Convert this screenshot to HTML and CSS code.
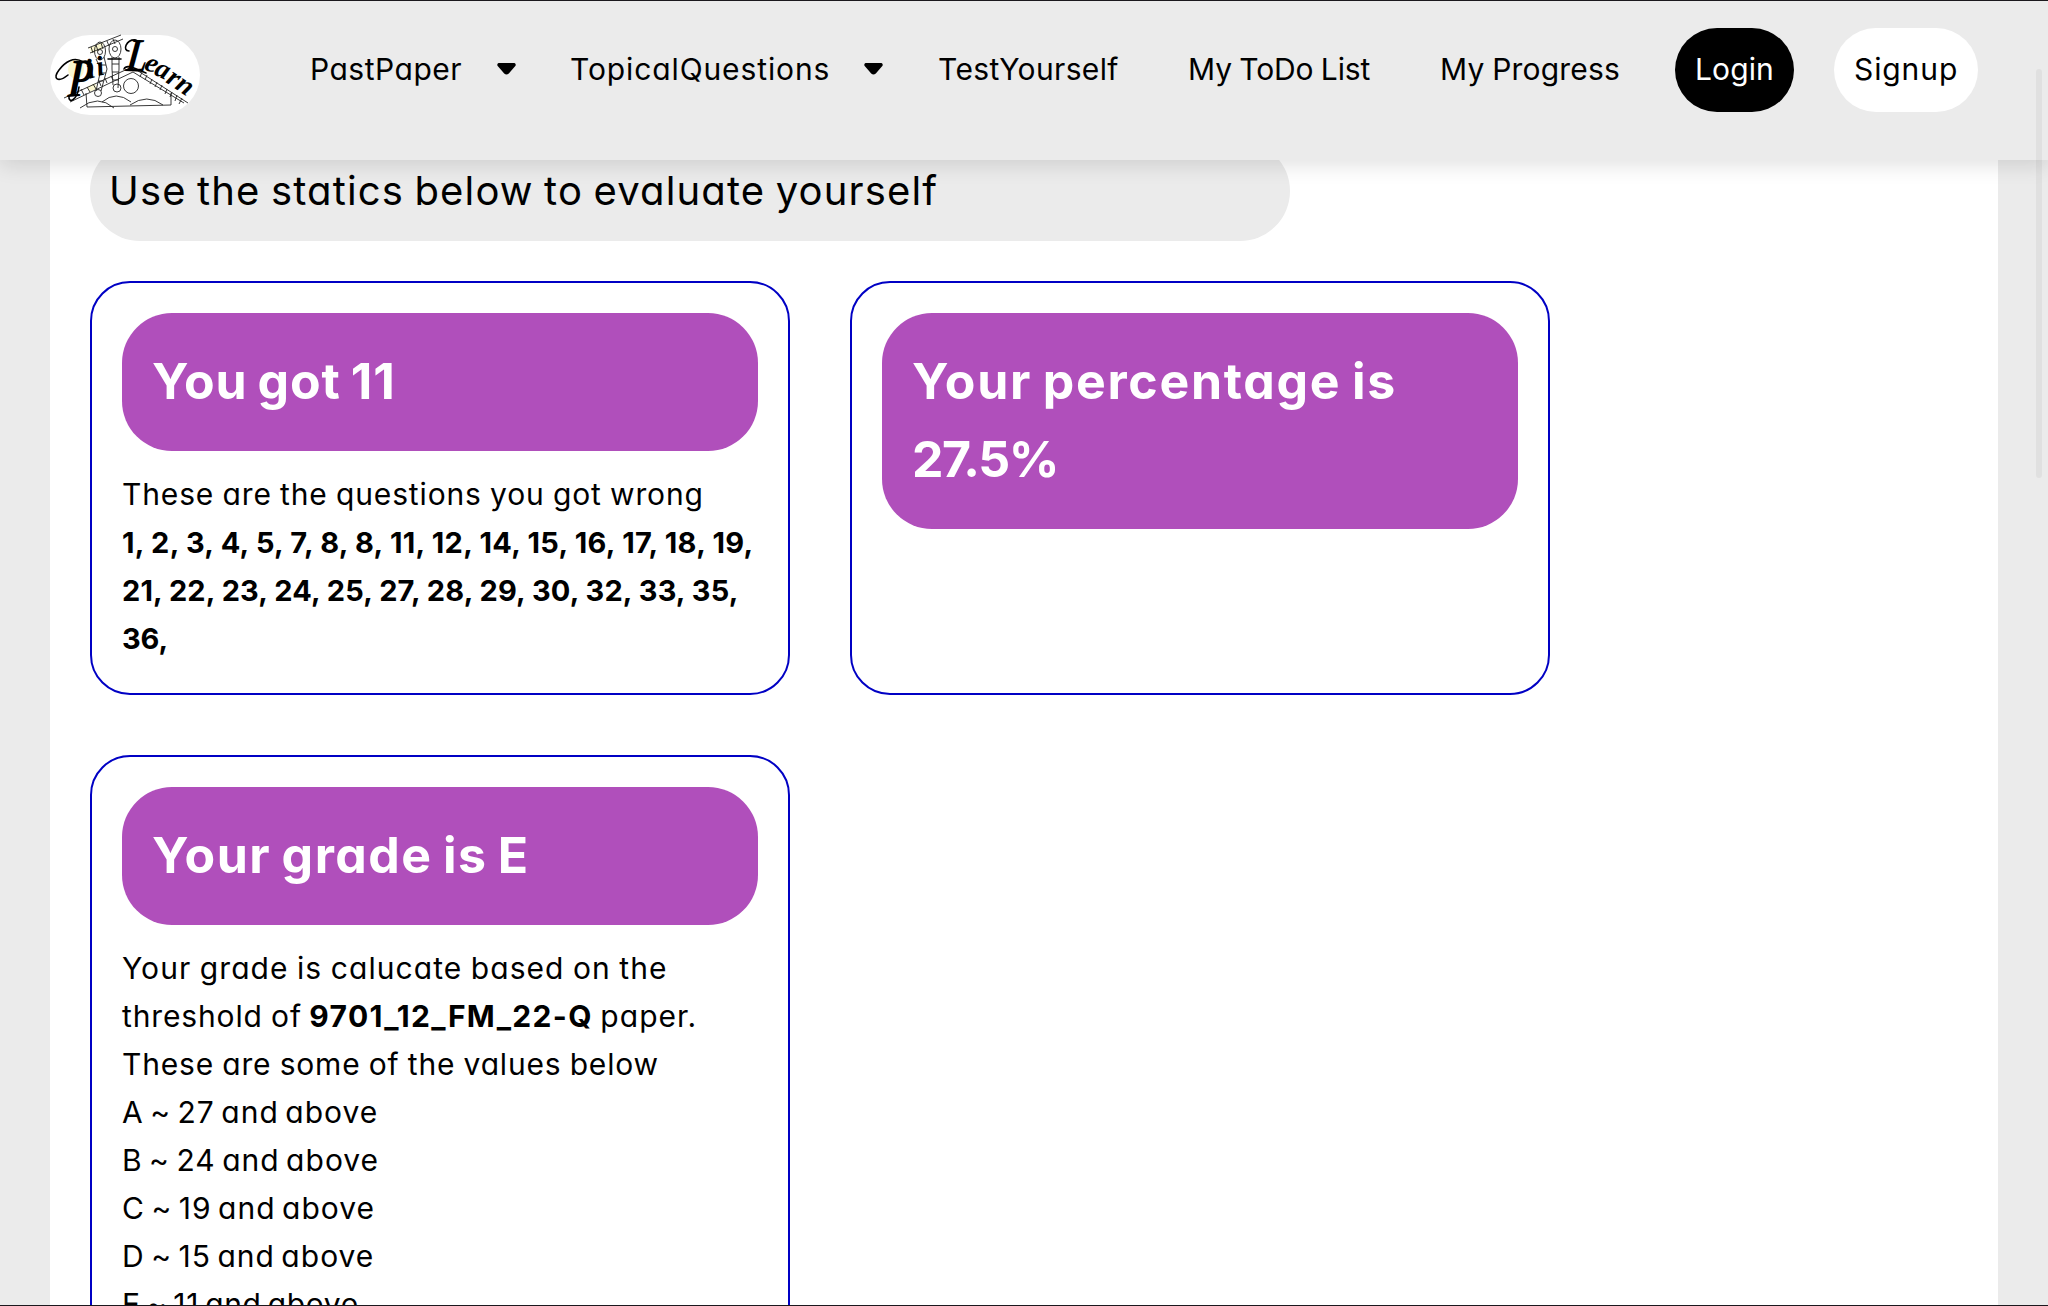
FILE: index.html
```
<!DOCTYPE html>
<html lang="en">
<head>
<meta charset="utf-8">
<title>PiiLearn</title>
<link rel="stylesheet" href="styles.css">
</head>
<body>
<header class="topbar">
  <a class="logo" aria-label="Pii-Learn">
    <svg width="150" height="80" viewBox="0 0 150 80">
      <g fill="#fbf7cf">
        <ellipse cx="26" cy="34" rx="8" ry="10"/>
        <path d="M39 13l14-6v7l-11 4zM37 52l8-4 2 6-8 3z"/>
      </g>
      <g fill="none" stroke="#222" stroke-width="0.9">
        <path d="M38 13L71 0M40 18L73 4M41 12l2 6M46 10l2 6M51 8l2 6M57 6l2 5M63 4l2 5"/>
        <ellipse cx="50" cy="16" rx="5.500" ry="9"/>
        <ellipse cx="65" cy="14" rx="6" ry="9"/>
        <circle cx="50" cy="17" r="2.500"/>
        <circle cx="65" cy="14" r="2.500"/>
        <path d="M46 24l5 10-5 22M54 22l3 12-6 22M50 30h6M50 38h6M48 46h5M62 22v12l1 16M69 22v12l-1 19M62 29h7M62 37h7M63 45h6"/>
        <circle cx="48" cy="58" r="3.500"/>
        <circle cx="67" cy="53" r="4"/>
        <circle cx="81" cy="51" r="7.500"/>
        <path d="M14 63L82 32l56 36M20 67l63-30 51 31"/>
        <path d="M31 54l3 6M37 52l3 5M43 49l3 5M49 46l2 5M55 43l2 5M61 41l2 4M92 37l-2 5M97 40l-2 5M102 44l-2 5M107 47l-2 5M112 50l-2 5M117 54l-2 5M122 57l-2 5M127 60l-2 6M132 63l-3 6"/>
        <path d="M36 58l1 14 84-2V58"/>
        <path d="M30 73q18-14 34 0M52 67q14-12 29 0M80 70q17-12 33 0"/>
      </g>
      <path d="M18 40c-10 8-16 4-9-5C15 27 24 21 33 27M29 52c-2 14-11 17-10 9M58 24h13M79 16c-7 0-3-12 7-11M74 34c3-6 13 1 22 4" fill="none" stroke="#000" stroke-width="1.600" stroke-linecap="round"/>
      <g class="logo-text">
        <text transform="translate(17 62) rotate(-4) skewX(-8)" font-size="54" textLength="24" lengthAdjust="spacingAndGlyphs">P</text>
        <text transform="translate(39 44) rotate(-16)" font-size="28">i</text>
        <text transform="translate(48 41) rotate(-12)" font-size="28">i</text>
        <text transform="translate(75 36) rotate(2) skewX(-6)" font-size="48" textLength="21" lengthAdjust="spacingAndGlyphs">L</text>
        <text transform="translate(93 34) rotate(22)" font-size="28">e</text>
        <text transform="translate(103 39) rotate(26)" font-size="28">a</text>
        <text transform="translate(115 47) rotate(32)" font-size="28">r</text>
        <text transform="translate(124 53) rotate(34)" font-size="28">n</text>
      </g>
    </svg>
  </a>
  <nav class="menu">
    <a class="item past"><span class="t-past">PastPaper</span><svg class="caret" viewBox="0 0 19 12"><path d="M1.500 0h16q2 1 .8 3l-6.500 7.500q-2.300 2-4.600 0L.7 3Q-.5 1 1.500 0z"/></svg></a>
    <a class="item topical"><span class="t-topical">TopicalQuestions</span><svg class="caret" viewBox="0 0 19 12"><path d="M1.500 0h16q2 1 .8 3l-6.500 7.500q-2.300 2-4.600 0L.7 3Q-.5 1 1.500 0z"/></svg></a>
    <a class="item test">TestYourself</a>
    <a class="item todo">My ToDo List</a>
    <a class="item progress">My Progress</a>
    <a class="button login">Login</a>
    <a class="button signup">Signup</a>
  </nav>
</header>
<main class="page">
  <p class="intro">Use the statics below to evaluate yourself</p>
  <section class="cards">
    <article class="card">
      <h2><span class="t-got">You got 11</span></h2>
      <p><span class="t-wrong">These are the questions you got wrong</span><br>
      <b class="t-nums1">1, 2, 3, 4, 5, 7, 8, 8, 11, 12, 14, 15, 16, 17, 18, 19,</b><br>
      <b class="t-nums2">21, 22, 23, 24, 25, 27, 28, 29, 30, 32, 33, 35,</b><br>
      <b class="t-nums3">36,</b></p>
    </article>
    <article class="card">
      <h2><span class="t-percent">Your percentage is</span><br><span class="t-value">27.5%</span></h2>
    </article>
    <article class="card">
      <h2><span class="t-grade">Your grade is E</span></h2>
      <p><span class="t-based">Your grade is calucate based on the</span><br>
      <span class="t-wrong">threshold of</span> <b class="t-paper">9701_12_FM_22-Q</b> <span class="t-based">paper.</span><br>
      <span class="t-some">These are some of the values below</span></p>
      <ul class="thresholds">
        <li>A ~ 27 and above</li>
        <li>B ~ 24 and above</li>
        <li>C ~ 19 and above</li>
        <li>D ~ 15 and above</li>
        <li class="t-last">E ~ 11 and above</li>
      </ul>
    </article>
  </section>
</main>
<div class="scroll-thumb"></div>
<div class="edge edge-top"></div>
<div class="edge edge-bottom"></div>
</body>
</html>
```
FILE: styles.css
```
* { box-sizing: border-box; margin: 0; padding: 0; }

body {
  height: 1306px;
  overflow: hidden;
  background: #ebebeb;
  color: #000;
  font: 30px/48px Inter, "Open Sans", sans-serif;
  font-feature-settings: "cv11";
  word-spacing: -1px;
}

.topbar {
  position: relative;
  z-index: 2;
  display: flex;
  align-items: flex-start;
  height: 160px;
  padding: 28px 70px 0 50px;
  background: #ebebeb;
  box-shadow: 0 5px 20px rgba(0, 0, 0, 0.12);
}

.logo {
  width: 150px;
  height: 80px;
  margin: 7px 110px 0 0;
  border-radius: 40px;
  background: #fff;
}
.logo svg { display: block; overflow: visible; }
.logo-text { font-family: "Liberation Serif", serif; font-style: italic; font-weight: 700; }

.menu { display: flex; align-items: center; height: 84px; white-space: nowrap; }
.item { display: flex; align-items: center; padding-bottom: 2px; }
.caret { width: 19px; height: 12px; margin: -1px 0 0 auto; }
.past { width: 260px; padding-right: 54px; }
.topical { width: 368px; padding-right: 55px; }
.test { width: 250px; letter-spacing: 0.36px; }
.todo { width: 252px; letter-spacing: -0.1px; }
.progress { width: 235px; letter-spacing: 0.2px; }

.button {
  display: flex;
  align-items: center;
  height: 84px;
  padding: 0 0 2px 20px;
  border-radius: 42px;
}
.login { width: 119px; margin-right: 40px; background: #000; color: #fff; letter-spacing: 0.1px; }
.signup { width: 144px; background: #fff; letter-spacing: 0.9px; }

.page {
  height: 1166px;
  margin: -20px 50px 0;
  padding: 1px 40px 0;
  background: #fff;
}

.intro {
  width: 1200px;
  height: 100px;
  padding-left: 19px;
  border-radius: 50px;
  background: #ebebeb;
  font-size: 40px;
  line-height: 100px;
  letter-spacing: 1.15px;
  word-spacing: -2px;
}

.cards {
  display: grid;
  grid-template-columns: 700px 700px;
  gap: 60px;
  margin-top: 40px;
}

.card {
  padding: 30px 30px 31px;
  border: 2px solid #0000c4;
  border-radius: 40px;
  white-space: nowrap;
}
.card h2 {
  padding: 29px 30px 31px;
  border-radius: 50px;
  background: #b04fbb;
  color: #fff;
  font-size: 50px;
  line-height: 78px;
  word-spacing: -3px;
}
.card p { margin-top: 19px; }
.thresholds { list-style: none; letter-spacing: 1.02px; word-spacing: -3px; }

.t-past { letter-spacing: 0.5px; }
.t-topical { letter-spacing: 0.89px; }
.t-got { letter-spacing: 0.94px; }
.t-percent { letter-spacing: 1.72px; }
.t-value { letter-spacing: -1.5px; }
.t-grade { letter-spacing: 1.5px; }
.t-wrong { letter-spacing: 0.86px; }
.t-some { letter-spacing: 0.82px; }
.t-nums1, .t-nums2, .t-nums3 { font-size: 29px; line-height: 1; word-spacing: 0; }
.t-nums1 { letter-spacing: 0.31px; }
.t-nums2 { letter-spacing: 0.13px; }
.t-nums3 { letter-spacing: -0.1px; }
.t-based { letter-spacing: 1.06px; }
.t-paper { letter-spacing: 1.35px; }
.t-last { letter-spacing: 0.65px; }

.scroll-thumb {
  position: absolute;
  z-index: 3;
  top: 69px;
  left: 2036px;
  width: 6px;
  height: 409px;
  border-radius: 3px;
  background: rgba(0, 0, 0, 0.045);
}

.edge { position: absolute; z-index: 4; left: 0; width: 100%; height: 1px; background: #1b181d; }
.edge-top { top: 0; }
.edge-bottom { top: 1305px; }
```
